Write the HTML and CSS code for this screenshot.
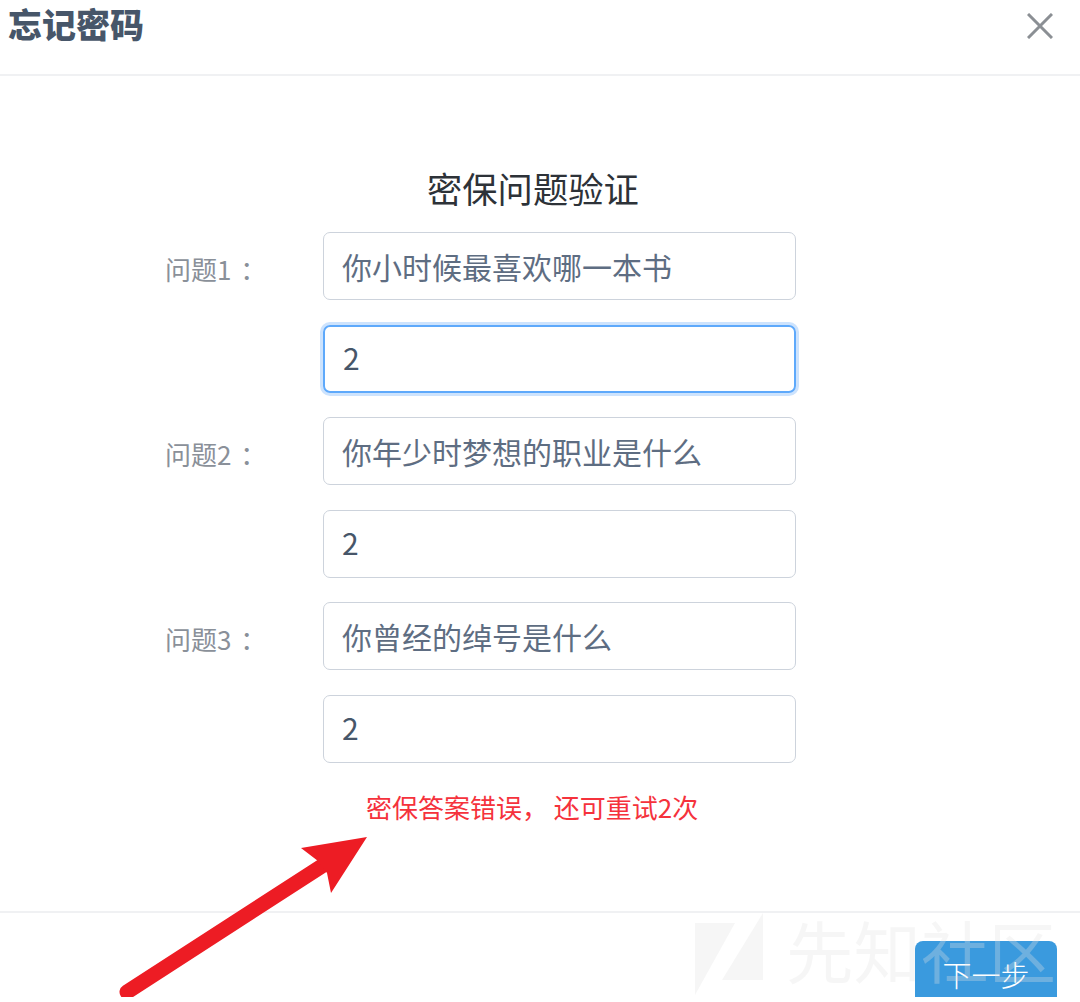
FILE: index.html
```html
<!DOCTYPE html>
<html lang="zh-CN">
<head>
<meta charset="utf-8">
<title>忘记密码</title>
<link rel="stylesheet" href="styles.css">
</head>
<body>
<div class="dialog">
  <header class="head">
    <h1 class="title">忘记密码</h1>
    <svg class="close" viewBox="0 0 26 26" width="26" height="26"><path d="M1 1 25 25M25 1 1 25"/></svg>
  </header>
  <main class="body">
    <h2 class="heading">密保问题验证</h2>
    <form class="form">
      <label class="label">问题1 ：</label><div class="field">你小时候最喜欢哪一本书</div>
      <div class="field answer focus">2</div>
      <label class="label">问题2 ：</label><div class="field">你年少时梦想的职业是什么</div>
      <div class="field answer">2</div>
      <label class="label">问题3 ：</label><div class="field">你曾经的绰号是什么</div>
      <div class="field answer">2</div>
    </form>
    <p class="error">密保答案错误， 还可重试2次</p>
  </main>
  <footer class="foot">
    <button class="next" type="button">下一步</button>
  </footer>
  <div class="mark">
    <svg class="mark-logo" viewBox="0 0 68 82" width="68" height="82"><path d="M0 10H40L0 82ZM68 0V67H27Z"/></svg>
    <span class="mark-text">先知社区</span>
  </div>
  <svg class="arrow" viewBox="0 0 1080 997" width="1080" height="997">
    <path class="arrow-shaft" d="M127 992 322 866"/>
    <path class="arrow-head" d="M367 837 301 848 318 861 327 873 331 893Z"/>
  </svg>
</div>
</body>
</html>
```
FILE: styles.css
```css
* { box-sizing: border-box; }
html, body { margin: 0; background: #fff; }
body { font-family: "Noto Sans CJK SC", "Noto Sans", sans-serif; }
.dialog { position: relative; width: 1080px; height: 997px; overflow: hidden; display: flex; flex-direction: column; }
.head { height: 76px; flex: none; display: flex; align-items: flex-start; justify-content: space-between; padding: 0 27px 0 8px; border-bottom: 2px solid #f0f1f3; }
.title { margin: 2px 0 0; font-size: 34px; line-height: 44px; font-weight: 900; color: #475669; }
.close { margin-top: 13px; }
.close path { stroke: #8b8f94; stroke-width: 3; fill: none; }
.body { flex: 1; display: flex; flex-direction: column; align-items: flex-start; padding-top: 86px; }
.heading { margin: 0 0 18px 427px; font-size: 35.3px; line-height: 52px; font-weight: 400; color: #2d3238; }
.form { display: grid; grid-template-columns: 158px 473px; grid-auto-rows: 68px; row-gap: 24.6px; align-items: center; padding-left: 165px; }
.label { font-size: 26px; line-height: 36px; padding-top: 6px; color: #8a9099; grid-column: 1; white-space: pre; word-spacing: 3px; }
.field { grid-column: 2; height: 68px; display: flex; align-items: center; padding: 0 18px; border: 1.5px solid #cdd3dc; border-radius: 7px; font-size: 30px; color: #5e6d82; }
.answer { color: #475669; padding-bottom: 3px; }
.focus { border: 2px solid #5ea9fb; box-shadow: 0 0 0 3px #cde3fd; }
.error { margin: 26px 0 0 366px; font-size: 26px; line-height: 36px; color: #f5323c; white-space: pre; }
.foot { height: 86px; flex: none; display: flex; justify-content: flex-end; align-items: flex-start; padding: 28px 23px 0 0; border-top: 2px solid #f0f1f3; }
.next { width: 142px; height: 58px; padding: 8px 0 0; border: 0; border-radius: 8px 8px 0 0; background: #3a9ade; color: #fff; font: 300 29px/48px "Noto Sans CJK SC", sans-serif; }
.mark { position: absolute; left: 695px; top: 913px; display: flex; align-items: flex-start; gap: 23px; pointer-events: none; }
.mark-logo path { fill: rgba(226,226,226,.31); }
.mark-text { font-size: 67.5px; line-height: 72px; color: rgba(226,226,226,.31); white-space: nowrap; }
.arrow { position: absolute; left: 0; top: 0; pointer-events: none; }
.arrow-shaft { stroke: #ed1c24; stroke-width: 15; stroke-linecap: round; fill: none; }
.arrow-head { fill: #ed1c24; }
```
